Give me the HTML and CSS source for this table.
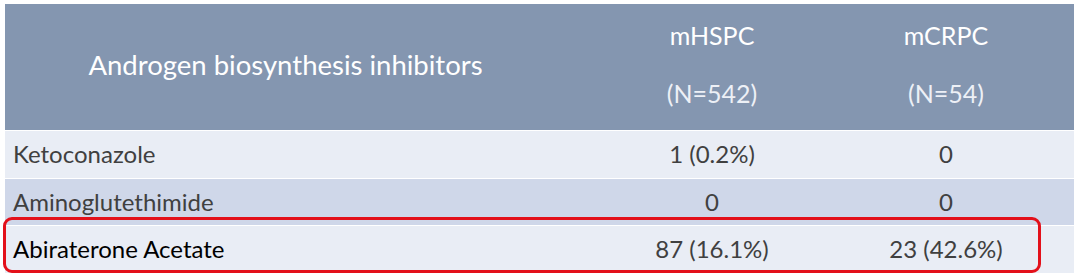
FILE: index.html
```html
<!DOCTYPE html>
<html>
<head>
<meta charset="utf-8">
<link rel="stylesheet" href="styles.css">
</head>
<body>
<div class="wrap">
  <div class="grid">
    <div class="hd hd-title">Androgen biosynthesis inhibitors</div>
    <div class="hd hd-col"><span>mHSPC</span><span class="n">(N=542)</span></div>
    <div class="hd hd-col c3"><span>mCRPC</span><span class="n">(N=54)</span></div>

    <div class="cell name light">Ketoconazole</div>
    <div class="cell num light">1 (0.2%)</div>
    <div class="cell num light c3">0</div>

    <div class="cell name dark">Aminoglutethimide</div>
    <div class="cell num dark">0</div>
    <div class="cell num dark c3">0</div>

    <div class="cell name light strong">Abiraterone Acetate</div>
    <div class="cell num light">87 (16.1%)</div>
    <div class="cell num light c3">23 (42.6%)</div>
  </div>
  <div class="highlight"></div>
</div>
</body>
</html>
```
FILE: styles.css
```css
html, body {
  margin: 0;
  padding: 0;
  background: #ffffff;
}
body {
  font-family: Lato, "Open Sans", sans-serif;
  color: #404040;
}
.wrap {
  position: relative;
  padding: 4px 6px 0 5px;
  width: 1069px;
}
.grid {
  display: grid;
  grid-template-columns: 589px 236px 244px;
  grid-template-rows: 126px 47px 46px 47px;
  row-gap: 1px;
}
.hd {
  background: #8496b0;
  color: #ffffff;
  display: flex;
  align-items: center;
  justify-content: center;
}
.hd-title {
  font-size: 27.5px;
  padding-right: 28px;
  padding-bottom: 6px;
}
.hd-col {
  flex-direction: column;
  font-size: 25px;
  padding-bottom: 6px;
}
.hd-col span {
  line-height: 58px;
}
.hd-col .n {
  color: #edf0f6;
}
.c3 {
  padding-right: 12px;
}
.cell {
  display: flex;
  align-items: center;
  font-size: 24px;
  padding-bottom: 2px;
}
.light {
  background: #e9edf5;
}
.dark {
  background: #cfd7e9;
}
.name {
  padding-left: 8px;
}
.num {
  justify-content: center;
}
.strong {
  color: #000000;
}
.highlight {
  position: absolute;
  left: 3px;
  top: 217px;
  width: 1032px;
  height: 50px;
  border: 3px solid #e3101a;
  border-radius: 9px;
}
```
